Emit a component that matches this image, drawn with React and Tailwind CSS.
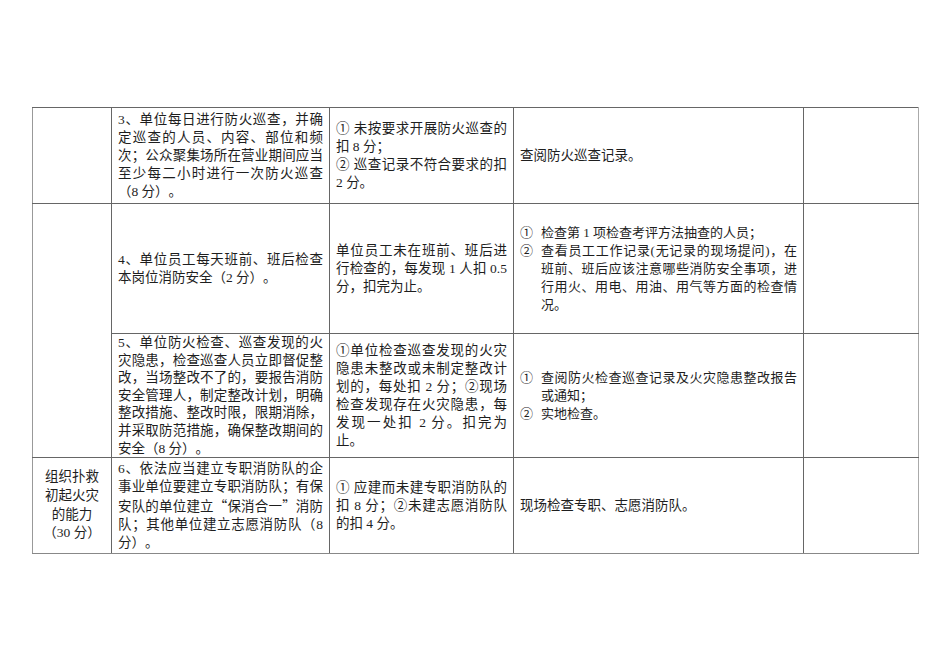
import React from "react";

const J = ({ lines }) => (
  <>
    {lines.map((l, i) => (
      <div
        key={i}
        className={
          i < lines.length - 1
            ? "whitespace-nowrap [text-align-last:justify] text-justify"
            : "whitespace-nowrap"
        }
      >
        {l}
      </div>
    ))}
  </>
);

const Item = ({ n, lines }) => (
  <div className="flex">
    <span className="w-[21px] shrink-0">{n}</span>
    <div className="flex-1 min-w-0">
      <J lines={lines} />
    </div>
  </div>
);

const Q = ({ children }) => (
  <span className="font-['Noto_Sans_CJK_SC',sans-serif]">{children}</span>
);

const td = "border border-[#666] align-middle px-[6px] py-0";

export default function App() {
  return (
    <div className="min-h-screen bg-white pt-[107px] pl-[32px] text-[13.5px] leading-[18px] text-[#1e1e1e] [text-spacing-trim:space-all] font-['Liberation_Serif','Noto_Sans_CJK_SC',serif]">
      <table className="table-fixed border-collapse w-[886px]">
        <colgroup>
          <col className="w-[79px]" />
          <col className="w-[218px]" />
          <col className="w-[184px]" />
          <col className="w-[290px]" />
          <col className="w-[115px]" />
        </colgroup>
        <tbody>
          <tr className="h-[96px]">
            <td className={`${td} border-l-[#999]`}></td>
            <td className={td}>
              <J
                lines={[
                  "3、单位每日进行防火巡查，并确",
                  "定巡查的人员、内容、部位和频",
                  "次；公众聚集场所在营业期间应当",
                  "至少每二小时进行一次防火巡查",
                  "（8 分）。",
                ]}
              />
            </td>
            <td className={td}>
              <J lines={["① 未按要求开展防火巡查的", "扣 8 分；"]} />
              <J lines={["② 巡查记录不符合要求的扣", "2 分。"]} />
            </td>
            <td className={td}>查阅防火巡查记录。</td>
            <td className={`${td} border-r-[#aaa]`}></td>
          </tr>
          <tr className="h-[130px]">
            <td className={`${td} border-l-[#999]`} rowSpan={2}></td>
            <td className={td}>
              <J
                lines={[
                  "4、单位员工每天班前、班后检查",
                  "本岗位消防安全（2 分）。",
                ]}
              />
            </td>
            <td className={td}>
              <J
                lines={[
                  "单位员工未在班前、班后进",
                  "行检查的，每发现 1 人扣 0.5",
                  "分，扣完为止。",
                ]}
              />
            </td>
            <td className={`${td} text-[13px]`}>
              <Item n="①" lines={["检查第 1 项检查考评方法抽查的人员；"]} />
              <Item
                n="②"
                lines={[
                  "查看员工工作记录(无记录的现场提问)，在",
                  "班前、班后应该注意哪些消防安全事项，进",
                  "行用火、用电、用油、用气等方面的检查情",
                  "况。",
                ]}
              />
            </td>
            <td className={`${td} border-r-[#aaa]`}></td>
          </tr>
          <tr className="h-[124px]">
            <td className={`${td} leading-[17.6px]`}>
              <J
                lines={[
                  "5、单位防火检查、巡查发现的火",
                  "灾隐患，检查巡查人员立即督促整",
                  "改，当场整改不了的，要报告消防",
                  "安全管理人，制定整改计划，明确",
                  "整改措施、整改时限，限期消除，",
                  "并采取防范措施，确保整改期间的",
                  "安全（8 分）。",
                ]}
              />
            </td>
            <td className={td}>
              <J
                lines={[
                  "①单位检查巡查发现的火灾",
                  "隐患未整改或未制定整改计",
                  "划的，每处扣 2 分；②现场",
                  "检查发现存在火灾隐患，每",
                  "发现一处扣 2 分。扣完为",
                  "止。",
                ]}
              />
            </td>
            <td className={`${td} text-[13px]`}>
              <Item
                n="①"
                lines={["查阅防火检查巡查记录及火灾隐患整改报告", "或通知；"]}
              />
              <Item n="②" lines={["实地检查。"]} />
            </td>
            <td className={`${td} border-r-[#aaa]`}></td>
          </tr>
          <tr className="h-[96px]">
            <td className={`${td} border-l-[#999] border-b-[#888] text-center leading-[18.6px]`}>
              <div>组织扑救</div>
              <div>初起火灾</div>
              <div>的能力</div>
              <div>（30 分）</div>
            </td>
            <td className={`${td} border-b-[#888]`}>
              <J
                lines={[
                  "6、依法应当建立专职消防队的企",
                  "事业单位要建立专职消防队；有保",
                  <>
                    安队的单位建立<Q>“</Q>保消合一<Q>”</Q>消防
                  </>,
                  "队；其他单位建立志愿消防队（8",
                  "分）。",
                ]}
              />
            </td>
            <td className={`${td} border-b-[#888]`}>
              <J
                lines={[
                  "① 应建而未建专职消防队的",
                  "扣 8 分；②未建志愿消防队",
                  "的扣 4 分。",
                ]}
              />
            </td>
            <td className={`${td} border-b-[#888]`}>现场检查专职、志愿消防队。</td>
            <td className={`${td} border-r-[#aaa] border-b-[#888]`}></td>
          </tr>
        </tbody>
      </table>
    </div>
  );
}
